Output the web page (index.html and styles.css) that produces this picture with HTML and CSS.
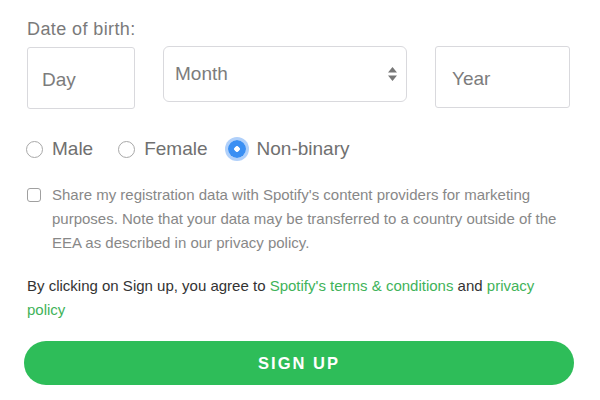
FILE: index.html
```html
<!DOCTYPE html>
<html>
<head>
<meta charset="utf-8">
<link rel="stylesheet" href="styles.css">
</head>
<body>
<form class="signup">
  <div class="dob-label">Date of birth:</div>
  <div class="dob-row">
    <div class="field day"><span class="ph">Day</span></div>
    <div class="field month">
      <span class="ph">Month</span>
      <svg class="arrows" width="9" height="14" viewBox="0 0 9 14"><path d="M4.5 0 L9 5.5 L0 5.5 Z M0 8.5 L9 8.5 L4.5 14 Z" fill="#777"/></svg>
    </div>
    <div class="field year"><span class="ph">Year</span></div>
  </div>
  <div class="gender-row">
    <label class="radio"><span class="circle"></span>Male</label>
    <label class="radio"><span class="circle"></span>Female</label>
    <label class="radio"><span class="circle checked"></span>Non-binary</label>
  </div>
  <div class="share">
    <span class="box"></span>
    <p>Share my registration data with Spotify's content providers for marketing purposes. Note that your data may be transferred to a country outside of the EEA as described in our privacy policy.</p>
  </div>
  <p class="terms">By clicking on Sign up, you agree to <a href="#">Spotify's terms &amp; conditions</a> and <a href="#">privacy policy</a></p>
  <button type="button" class="btn">SIGN UP</button>
</form>
</body>
</html>
```
FILE: styles.css
```css
* { box-sizing: border-box; }
html, body { margin: 0; padding: 0; background: #fff; }
body {
  font-family: "Liberation Sans", Arial, sans-serif;
  color: #333;
  width: 600px;
  height: 400px;
  overflow: hidden;
}
.signup {
  padding: 18px 26px 0 24px;
}
.dob-label {
  font-size: 18px;
  letter-spacing: 0.4px;
  color: #7a7a7a;
  margin-left: 3px;
  line-height: 22px;
}
.dob-row {
  display: flex;
  align-items: flex-start;
  gap: 28px;
  margin-top: 6px;
  margin-left: 3px;
}
.field {
  border: 1px solid #d9d9dd;
  border-radius: 3px;
  display: flex;
  align-items: center;
  font-size: 19px;
  color: #7c7c7c;
}
.day { width: 108px; height: 62px; padding: 4px 0 0 14px; margin-top: 1px; }
.month {
  width: 244px; height: 56px;
  border-radius: 6px;
  padding: 0 9px 0 11px;
  justify-content: space-between;
}
.year { width: 135px; height: 62px; padding: 4px 0 0 16px; }
.gender-row {
  display: flex;
  align-items: center;
  gap: 23px;
  margin-top: 28px;
  height: 24px;
}
.radio {
  display: flex;
  align-items: center;
  font-size: 19px;
  color: #707070;
}
.circle {
  width: 17px; height: 17px;
  border: 1px solid #a8a8a8;
  border-radius: 50%;
  margin: 0 9px 0 2px;
  background: #fff;
}
.circle.checked {
  width: 18px; height: 18px;
  margin: 0 11px 0 -3px;
  border: none;
  background: radial-gradient(circle, #fff 0 2.5px, #3a8ff3 3px);
  box-shadow: 0 0 0 3px rgba(80, 150, 245, 0.45);
}
.share {
  display: flex;
  align-items: flex-start;
  margin-top: 22px;
  padding-right: 4px;
}
.box {
  flex: none;
  width: 14px; height: 14px;
  border: 1px solid #a0a0a0;
  border-radius: 3px;
  margin: 5px 11px 0 3px;
}
.share p {
  margin: 0;
  font-size: 15px;
  line-height: 24px;
  color: #888;
}
.terms {
  margin: 19px 0 0 3px;
  font-size: 15px;
  line-height: 24px;
  color: #333;
}
.terms a { color: #3fb35a; text-decoration: none; }
.btn {
  display: block;
  width: 550px;
  height: 44px;
  margin-top: 19px;
  border: none;
  border-radius: 22px;
  background: #2ebd59;
  color: #fff;
  font-family: "Liberation Sans", Arial, sans-serif;
  font-weight: 700;
  font-size: 16.5px;
  letter-spacing: 2px;
  padding: 0;
}
```
